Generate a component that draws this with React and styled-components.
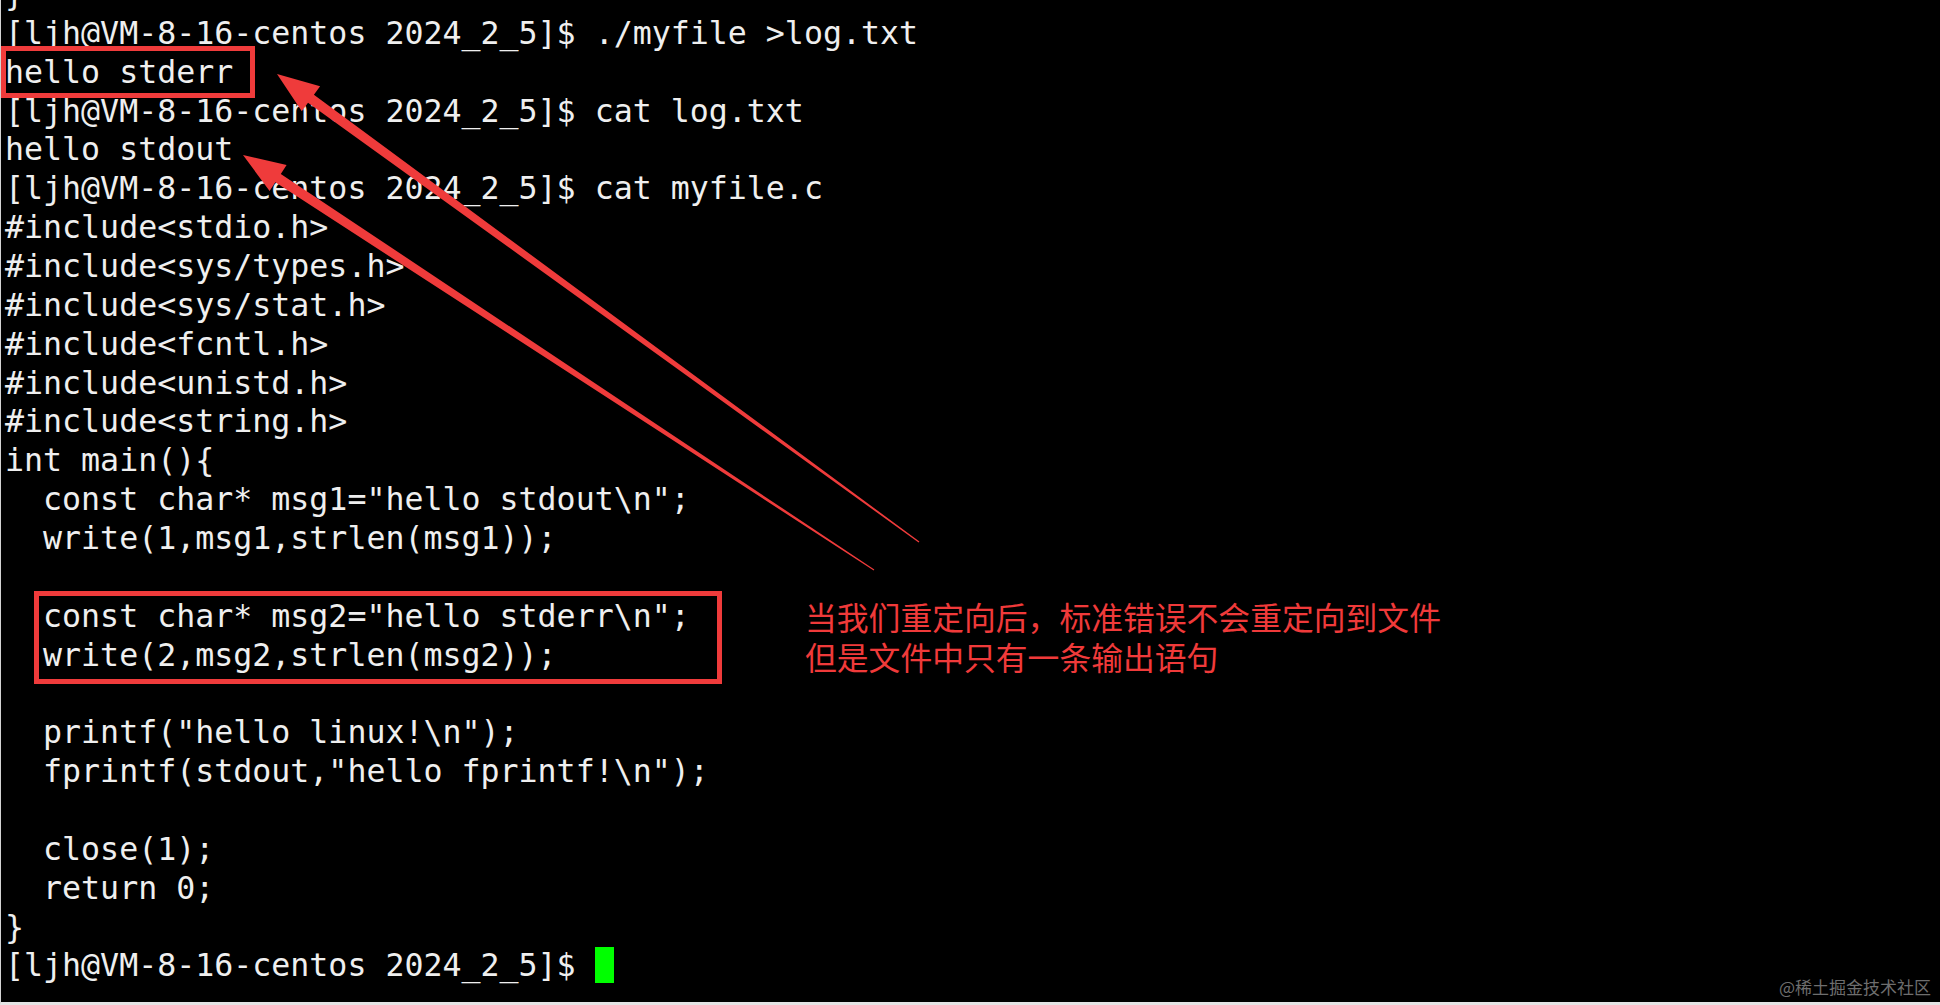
import React from "react";
import styled, { createGlobalStyle } from "styled-components";

const GlobalStyle = createGlobalStyle`
  html, body {
    margin: 0;
    padding: 0;
    background: #000;
  }
  #root {
    width: 1940px;
    height: 1005px;
  }
`;

const Screen = styled.div`
  position: relative;
  width: 1940px;
  height: 1005px;
  box-sizing: border-box;
  background: #000;
  border-left: 1px solid #d4d4d4;
  border-bottom: 3px solid #e4e4e4;
  overflow: hidden;
`;

const Output = styled.div`
  display: flex;
  flex-direction: column;
  margin-top: -25px;
  padding-left: 4px;
  font-family: "DejaVu Sans Mono", "Liberation Mono", monospace;
  font-size: 31.6px;
  color: #efefef;
`;

const Line = styled.div`
  display: flex;
  align-items: center;
  height: 38.87px;
  line-height: 38.87px;
  white-space: pre;
`;

const Code = styled.span`
  flex: 0 0 ${(p) => (p.$annotated ? "800px" : "auto")};
`;

const NoteText = styled.span`
  font-family: "Noto Sans CJK SC", "Noto Sans", sans-serif;
  font-size: 31.8px;
  line-height: 38.87px;
  margin-top: ${(p) => (p.$second ? "3px" : "1px")};
  color: #f03a3a;
`;

const Cursor = styled.span`
  display: inline-block;
  width: 19px;
  height: 36px;
  background: #00ff00;
  vertical-align: middle;
  margin-top: -4px;
`;

const HighlightBox = styled.div`
  position: absolute;
  left: ${(p) => p.$left}px;
  top: ${(p) => p.$top}px;
  width: ${(p) => p.$width}px;
  height: ${(p) => p.$height}px;
  box-sizing: border-box;
  border: 5px solid #ef3b3b;
  pointer-events: none;
`;

const ArrowLayer = styled.svg`
  position: absolute;
  left: 0;
  top: 0;
  width: 1940px;
  height: 1005px;
  pointer-events: none;
`;

const Watermark = styled.div`
  position: absolute;
  right: 9px;
  bottom: 4px;
  font-family: "Noto Sans CJK SC", "Noto Sans", sans-serif;
  font-size: 17px;
  line-height: 22px;
  color: #6e6e6e;
`;

const PROMPT = "[ljh@VM-8-16-centos 2024_2_5]$ ";

const lines = [
  { code: "}" },
  { code: PROMPT + "./myfile >log.txt" },
  { code: "hello stderr" },
  { code: PROMPT + "cat log.txt" },
  { code: "hello stdout" },
  { code: PROMPT + "cat myfile.c" },
  { code: "#include<stdio.h>" },
  { code: "#include<sys/types.h>" },
  { code: "#include<sys/stat.h>" },
  { code: "#include<fcntl.h>" },
  { code: "#include<unistd.h>" },
  { code: "#include<string.h>" },
  { code: "int main(){" },
  { code: '  const char* msg1="hello stdout\\n";' },
  { code: "  write(1,msg1,strlen(msg1));" },
  { code: "" },
  { code: '  const char* msg2="hello stderr\\n";', note: "当我们重定向后，标准错误不会重定向到文件" },
  { code: "  write(2,msg2,strlen(msg2));", note: "但是文件中只有一条输出语句", second: true },
  { code: "" },
  { code: '  printf("hello linux!\\n");' },
  { code: '  fprintf(stdout,"hello fprintf!\\n");' },
  { code: "" },
  { code: "  close(1);" },
  { code: "  return 0;" },
  { code: "}" },
];

function arrowPoints(tx, ty, px, py) {
  const dx = px - tx;
  const dy = py - ty;
  const len = Math.hypot(dx, dy);
  const ux = dx / len;
  const uy = dy / len;
  const nx = -uy;
  const ny = ux;
  const headLen = 42;
  const headHalf = 15.5;
  const neckHalf = 5;
  const tailHalf = 0.6;
  const bx = px - ux * headLen;
  const by = py - uy * headLen;
  const pts = [
    [tx + nx * tailHalf, ty + ny * tailHalf],
    [bx + nx * neckHalf, by + ny * neckHalf],
    [bx + nx * headHalf, by + ny * headHalf],
    [px, py],
    [bx - nx * headHalf, by - ny * headHalf],
    [bx - nx * neckHalf, by - ny * neckHalf],
    [tx - nx * tailHalf, ty - ny * tailHalf],
  ];
  return pts.map((p) => p.map((v) => v.toFixed(1)).join(",")).join(" ");
}

function Arrow({ tail, tip }) {
  return <polygon points={arrowPoints(tail[0], tail[1], tip[0], tip[1])} fill="#ef3b3b" />;
}

export default function App() {
  return (
    <>
      <GlobalStyle />
      <Screen>
        <Output>
          {lines.map((l, i) => (
            <Line key={i}>
              <Code $annotated={!!l.note}>{l.code}</Code>
              {l.note && <NoteText $second={l.second}>{l.note}</NoteText>}
            </Line>
          ))}
          <Line>
            <Code>
              {PROMPT}
              <Cursor />
            </Code>
          </Line>
        </Output>

        <HighlightBox $left={0} $top={46} $width={254} $height={52} />
        <HighlightBox $left={33} $top={591} $width={688} $height={93} />

        <ArrowLayer viewBox="0 0 1940 1005">
          <Arrow tail={[918, 542]} tip={[276, 74]} />
          <Arrow tail={[873, 570]} tip={[242, 155]} />
        </ArrowLayer>

        <Watermark>@稀土掘金技术社区</Watermark>
      </Screen>
    </>
  );
}
